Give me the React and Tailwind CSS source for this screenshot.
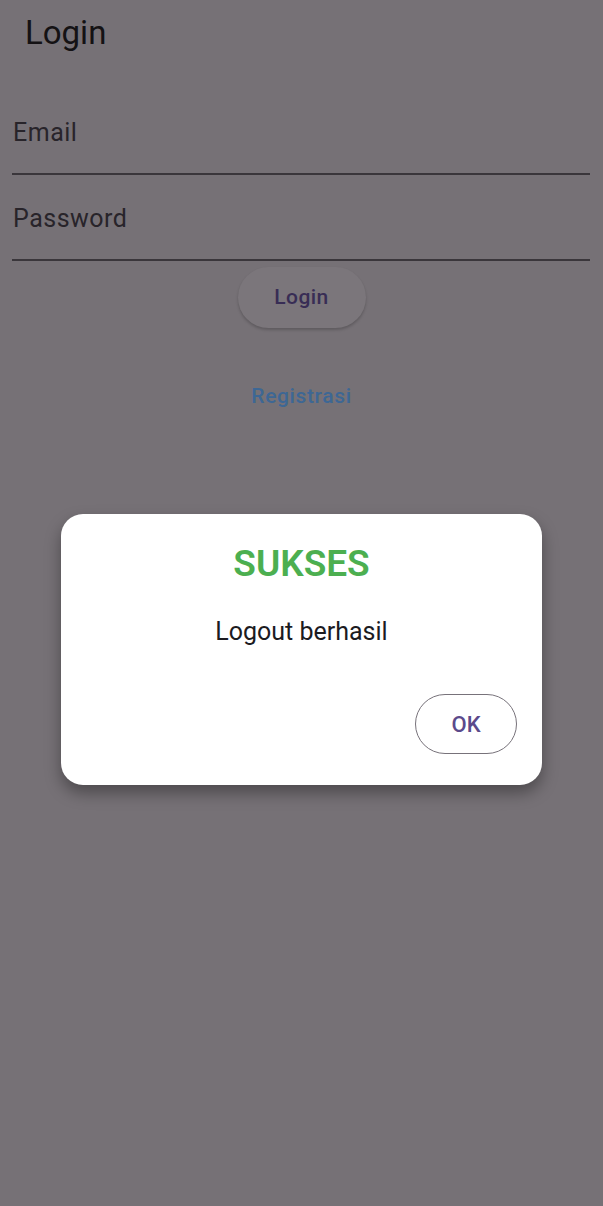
import React from 'react';

function Field({ label }) {
  return (
    <div className="h-[86px] flex flex-col justify-end">
      <div className="flex-1 flex items-center text-[25px] tracking-[0.02em] text-[#28242a] pt-[4px] pl-[1px]">
        {label}
      </div>
      <div className="h-[2px] bg-[#3a363b]" />
    </div>
  );
}

export default function App() {
  return (
    <div
      className="relative h-[1206px] w-full overflow-hidden bg-[#767176]"
      style={{ fontFamily: 'Roboto, "Noto Sans", sans-serif' }}
    >
      {/* App bar */}
      <div className="h-[66px] flex items-center px-[25px] text-[33px] text-[#141214]">
        Login
      </div>

      {/* Form */}
      <div className="pl-[12px] pr-[13px] mt-[23px]">
        <Field label="Email" />
        <Field label="Password" />
      </div>

      <div className="flex justify-center mt-[6px]">
        <button className="h-[61px] w-[128px] rounded-full bg-[#7b767b] shadow-[0_2px_3px_rgba(0,0,0,0.2)] text-[21px] tracking-[0.02em] font-medium text-[#382d55]">
          Login
        </button>
      </div>

      <div className="flex justify-center mt-[53px] text-[21px] tracking-[0.03em] font-medium text-[#3d6794]">
        Registrasi
      </div>

      {/* Dialog */}
      <div className="absolute left-[61px] top-[514px] w-[481px] h-[271px] rounded-[22px] bg-white shadow-[0_8px_16px_rgba(0,0,0,0.35)] flex flex-col">
        <div className="pt-[30px] text-center text-[37px] leading-[40px] font-semibold text-[#4caf50]">
          SUKSES
        </div>
        <div className="mt-[33px] text-center text-[25px] leading-[30px] text-[#1c1b1f]">
          Logout berhasil
        </div>
        <div className="flex justify-end pr-[25px] mt-[47px]">
          <button className="h-[60px] w-[102px] rounded-full border border-[#77727a] text-[22px] font-medium text-[#5b4a8b]">
            OK
          </button>
        </div>
      </div>
    </div>
  );
}
